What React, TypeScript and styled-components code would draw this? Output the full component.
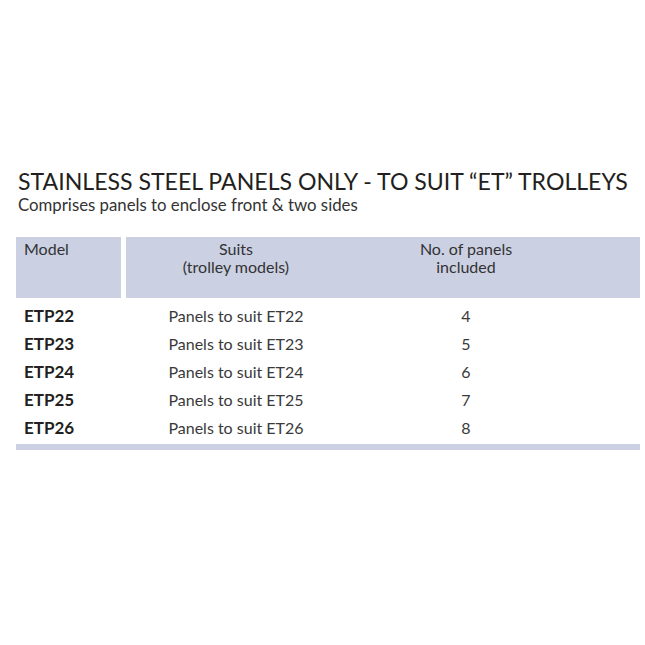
import React from "react";
import styled, { createGlobalStyle } from "styled-components";

const GlobalStyle = createGlobalStyle`
  html, body {
    margin: 0;
    padding: 0;
    background: #ffffff;
  }
  body {
    font-family: "Lato", "Open Sans", sans-serif;
    color: #231f20;
  }
`;

const Page = styled.div`
  width: 645px;
  height: 645px;
  padding: 167px 5px 0 16px;
  box-sizing: border-box;
`;

const Title = styled.h1`
  margin: 0 0 0 2px;
  font-size: 23.1px;
  line-height: 28px;
  font-weight: 400;
  color: #231f20;
  white-space: nowrap;
`;

const Subtitle = styled.p`
  margin: 0 0 0 2px;
  font-size: 16.8px;
  line-height: 20px;
  color: #333333;
`;

const Table = styled.div`
  margin-top: 22px;
  width: 624px;
`;

const RowGrid = styled.div`
  display: grid;
  grid-template-columns: 105px 1fr;
  column-gap: 5px;
`;

const HeadCell = styled.div`
  background: #cbd0e3;
  height: 61px;
  box-sizing: border-box;
  padding: 3px 8px 0;
  font-size: 16px;
  line-height: 18px;
  color: #333333;
`;

const HeadCols = styled(HeadCell)`
  display: grid;
  grid-template-columns: 220px 240px 1fr;
  padding: 3px 0 0;
`;

const Cols = styled.div`
  display: grid;
  grid-template-columns: 220px 240px 1fr;
`;

const ColText = styled.div`
  text-align: center;
`;

const Body = styled.div`
  padding: 3px 0 3px;
`;

const BodyRow = styled(RowGrid)`
  height: 28px;
  align-items: center;
`;

const ModelCell = styled.div`
  padding-left: 8px;
  font-weight: 700;
  font-size: 17px;
  color: #231f20;
`;

const BodyCell = styled.div`
  text-align: center;
  font-size: 16px;
  color: #3a3a3a;
`;

const BottomBar = styled.div`
  height: 6px;
  background: #cbd0e3;
`;

const rows = [
  { model: "ETP22", suits: "Panels to suit ET22", panels: "4" },
  { model: "ETP23", suits: "Panels to suit ET23", panels: "5" },
  { model: "ETP24", suits: "Panels to suit ET24", panels: "6" },
  { model: "ETP25", suits: "Panels to suit ET25", panels: "7" },
  { model: "ETP26", suits: "Panels to suit ET26", panels: "8" },
];

export default function App() {
  return (
    <>
      <GlobalStyle />
      <Page>
        <Title>STAINLESS STEEL PANELS ONLY - TO SUIT “ET” TROLLEYS</Title>
        <Subtitle>Comprises panels to enclose front &amp; two sides</Subtitle>
        <Table>
          <RowGrid>
            <HeadCell>Model</HeadCell>
            <HeadCols>
              <ColText>
                Suits
                <br />
                (trolley models)
              </ColText>
              <ColText>
                No. of panels
                <br />
                included
              </ColText>
              <div />
            </HeadCols>
          </RowGrid>
          <Body>
            {rows.map((r) => (
              <BodyRow key={r.model}>
                <ModelCell>{r.model}</ModelCell>
                <Cols>
                  <BodyCell>{r.suits}</BodyCell>
                  <BodyCell>{r.panels}</BodyCell>
                  <div />
                </Cols>
              </BodyRow>
            ))}
          </Body>
          <BottomBar />
        </Table>
      </Page>
    </>
  );
}
